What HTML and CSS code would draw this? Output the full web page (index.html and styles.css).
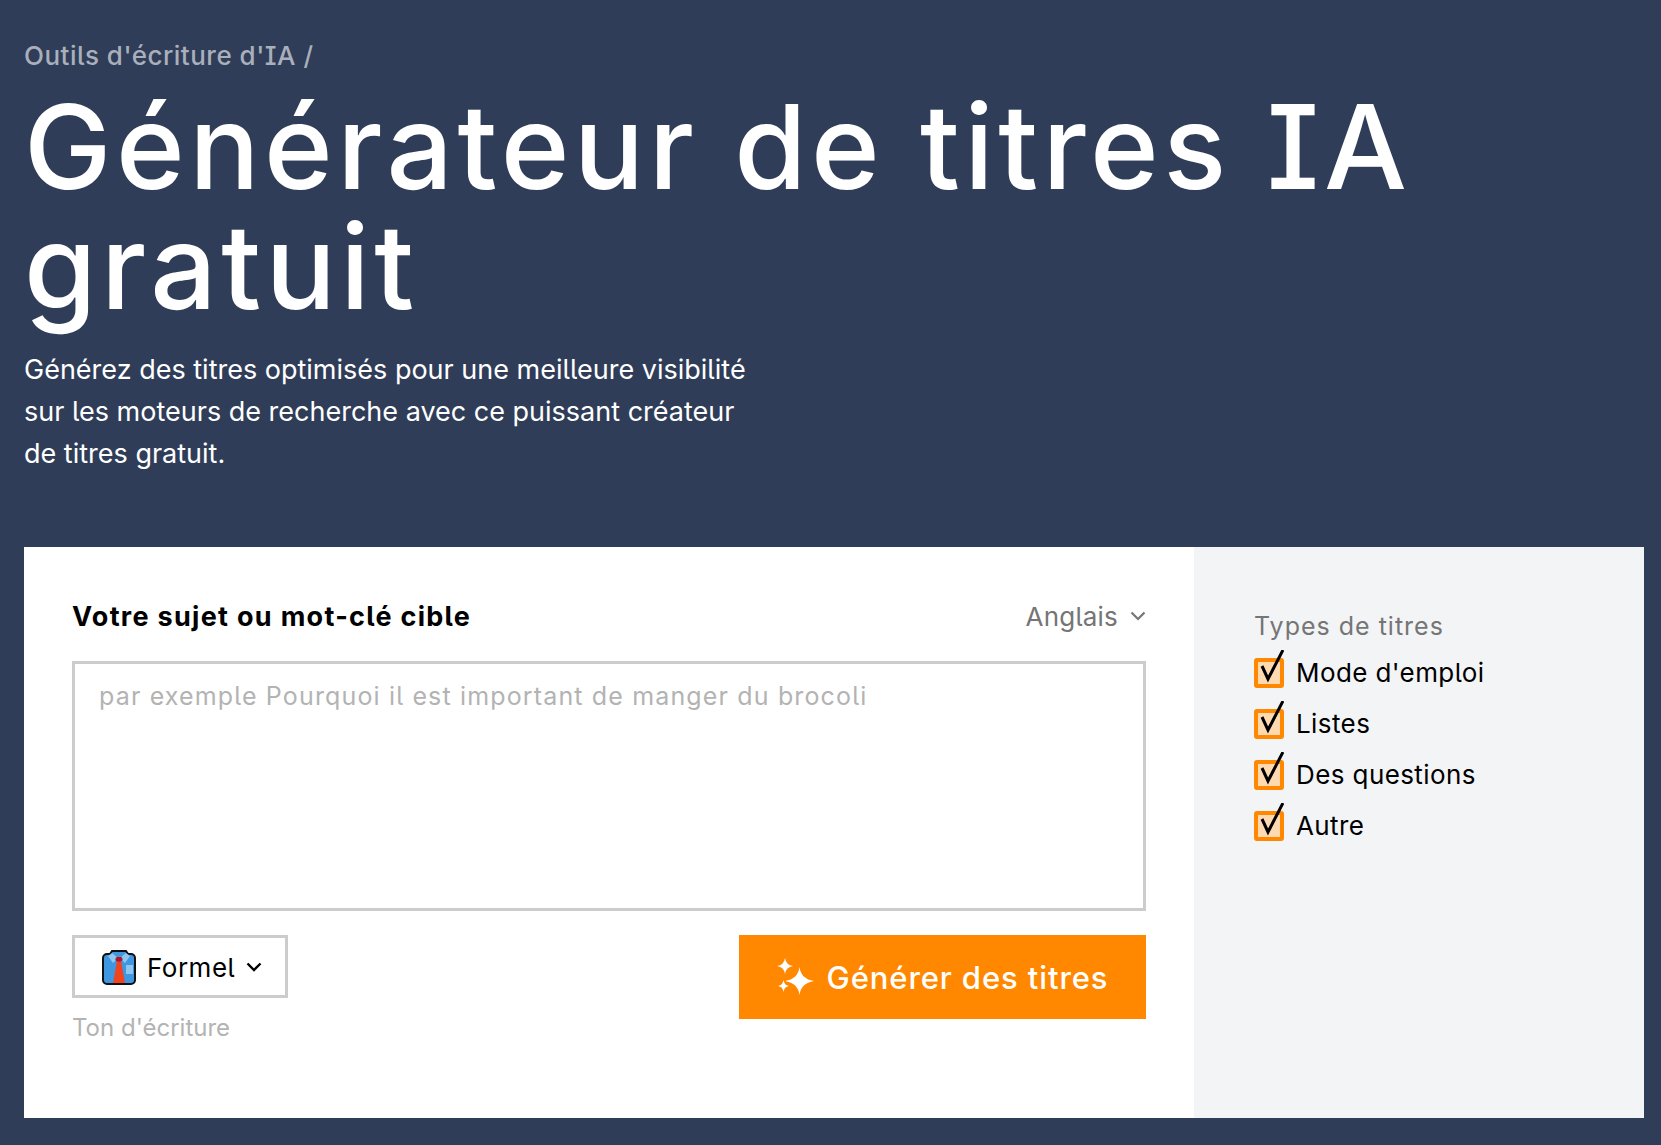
FILE: index.html
```html
<!DOCTYPE html>
<html lang="fr">
<head>
    <meta charset="UTF-8">
    <meta name="viewport" content="width=device-width, initial-scale=1.0">
    <title>Générateur de titres IA gratuit</title>
    <link rel="stylesheet" href="styles.css">
</head>
<body>

<header class="hero">
    <div class="crumb">Outils d'écriture d'IA /</div>
    <h1>Générateur de titres IA gratuit</h1>
    <p class="intro">Générez des titres optimisés pour une meilleure visibilité sur les moteurs de recherche avec ce puissant créateur de titres gratuit.</p>
</header>

<section class="card">

    <form class="main">
        <div class="label-row">
            <label class="topic-label" for="topic">Votre sujet ou mot-clé cible</label>
            <div class="lang">Anglais
                <svg class="chev" width="16" height="10" viewBox="0 0 16 10"><path d="M1.500 1.500L8 8l6.500-6.500" fill="none" stroke="currentColor" stroke-width="2.200"/></svg>
            </div>
        </div>

        <textarea id="topic" placeholder="par exemple Pourquoi il est important de manger du brocoli"></textarea>

        <div class="actions">
            <div>
                <div class="tone">
                    <svg width="34" height="36" viewBox="0 0 34 36">
                        <path d="M10 2h14l2 3h3a4 4 0 0 1 4 4v22a4 4 0 0 1-4 4H5a4 4 0 0 1-4-4V9a4 4 0 0 1 4-4h3z" fill="#3e97e0" stroke="#111" stroke-width="2"/>
                        <path d="M10 4l6 5-5 5-5-7zM24 4l-6 5 5 5 5-7z" fill="#8fc6f0"/>
                        <rect x="24" y="16" width="7" height="9" fill="#8fc6f0"/>
                        <path d="M15 12h4l4 22H11z" fill="#f2431f"/>
                        <rect x="13.500" y="8" width="7" height="4.500" rx="2" fill="#b3152a"/>
                    </svg>
                    <span class="tone-name">Formel</span>
                    <svg class="chev" width="16" height="10" viewBox="0 0 16 10"><path d="M1.500 1.500L8 8l6.500-6.500" fill="none" stroke="currentColor" stroke-width="2.400"/></svg>
                </div>
                <div class="tone-label">Ton d'écriture</div>
            </div>
            <button type="button" class="generate">
                <svg width="38" height="38" viewBox="0 0 38 38" fill="#fff">
                    <path d="M22.500 9Q24 21 37 23 24 25 22.500 37 21 25 8 23 21 21 22.500 9z"/>
                    <path d="M8 0Q9 7 16 8 9 9 8 16 7 9 0 8 7 7 8 0z"/>
                    <path d="M6.500 22Q7.200 27.300 12 28 7.200 28.700 6.500 34 5.800 28.700 1 28 5.800 27.300 6.500 22z"/>
                </svg>
                Générer des titres
            </button>
        </div>
    </form>

    <aside class="side">
        <div class="side-title">Types de titres</div>
        <ul class="types">
            <li><span class="check"><svg width="30" height="38" viewBox="0 0 30 38"><path d="M8 16l6 13L29 0" fill="none" stroke="#000" stroke-width="3"/></svg></span>Mode d'emploi</li>
            <li><span class="check"><svg width="30" height="38" viewBox="0 0 30 38"><path d="M8 16l6 13L29 0" fill="none" stroke="#000" stroke-width="3"/></svg></span>Listes</li>
            <li><span class="check"><svg width="30" height="38" viewBox="0 0 30 38"><path d="M8 16l6 13L29 0" fill="none" stroke="#000" stroke-width="3"/></svg></span>Des questions</li>
            <li><span class="check"><svg width="30" height="38" viewBox="0 0 30 38"><path d="M8 16l6 13L29 0" fill="none" stroke="#000" stroke-width="3"/></svg></span>Autre</li>
        </ul>
    </aside>

</section>

</body>
</html>
```

FILE: styles.css
```css
* {
    box-sizing: border-box;
}

body {
    margin: 0;
    padding: 0 17px 27px 24px;
    background-color: #2f3d58;
    font-family: Inter, "Liberation Sans", sans-serif;
    font-feature-settings: "cv05", "cv08";
}

.hero {
    padding-top: 41px;
    height: 547px;
}

.crumb {
    font-size: 26px;
    font-weight: 500;
    line-height: 30px;
    letter-spacing: 0.5px;
    color: #a9afbb;
}

h1 {
    margin: 16px 0 0;
    font-size: 117px;
    font-weight: 500;
    line-height: 120px;
    letter-spacing: 4.5px;
    color: #fff;
}

.intro {
    width: 740px;
    margin: 22px 0 0;
    font-size: 27px;
    line-height: 42px;
    color: #fff;
}

.card {
    display: flex;
    height: 571px;
    background-color: #fff;
}

.main {
    flex: 1;
    padding: 52px 48px 0;
}

.label-row {
    display: flex;
    justify-content: space-between;
    align-items: center;
    height: 34px;
}

.topic-label {
    font-size: 27px;
    font-weight: 700;
    letter-spacing: 1.3px;
    color: #000;
}

.lang {
    display: flex;
    align-items: center;
    gap: 12px;
    font-size: 26px;
    letter-spacing: 0.2px;
    color: #757575;
}

textarea {
    display: block;
    width: 100%;
    height: 250px;
    margin-top: 28px;
    padding: 16px 24px;
    border: 3px solid #ccc;
    border-radius: 0;
    outline: none;
    resize: none;
    font-family: Inter, "Liberation Sans", sans-serif;
    font-feature-settings: "cv05", "cv08";
    font-size: 25px;
    letter-spacing: 1.15px;
    line-height: 32px;
}

textarea::placeholder {
    color: #b3b3b3;
}

.actions {
    display: flex;
    justify-content: space-between;
    align-items: flex-start;
    margin-top: 24px;
}

.tone {
    display: flex;
    align-items: center;
    gap: 11px;
    width: 216px;
    height: 63px;
    padding-left: 27px;
    border: 3px solid #ccc;
    font-size: 26px;
    letter-spacing: 0.5px;
    color: #000;
}

.tone-name {
    padding-top: 2px;
}

.tone-label {
    margin-top: 15px;
    font-size: 24px;
    line-height: 30px;
    color: #b3b3b3;
}

.generate {
    display: flex;
    align-items: center;
    justify-content: center;
    gap: 12px;
    width: 407px;
    height: 84px;
    border: 0;
    background-color: #ff8800;
    color: #fff;
    font-family: Inter, "Liberation Sans", sans-serif;
    font-feature-settings: "cv05", "cv08";
    font-size: 31px;
    font-weight: 500;
    letter-spacing: 0.9px;
}

.side {
    width: 450px;
    padding: 62px 60px 0;
    background-color: #f3f4f6;
}

.side-title {
    font-size: 25px;
    line-height: 34px;
    letter-spacing: 1px;
    color: #757575;
}

.types {
    list-style: none;
    margin: 4px 0 0;
    padding: 0;
}

.types li {
    display: flex;
    align-items: center;
    height: 51px;
    font-size: 26px;
    letter-spacing: 0.4px;
    color: #000;
}

.check {
    position: relative;
    width: 30px;
    height: 30px;
    margin-right: 12px;
    border: 4px solid #ff8800;
    border-radius: 3px;
    background-color: #ffdab0;
}

.check svg {
    position: absolute;
    left: -4px;
    top: -12px;
}
```
